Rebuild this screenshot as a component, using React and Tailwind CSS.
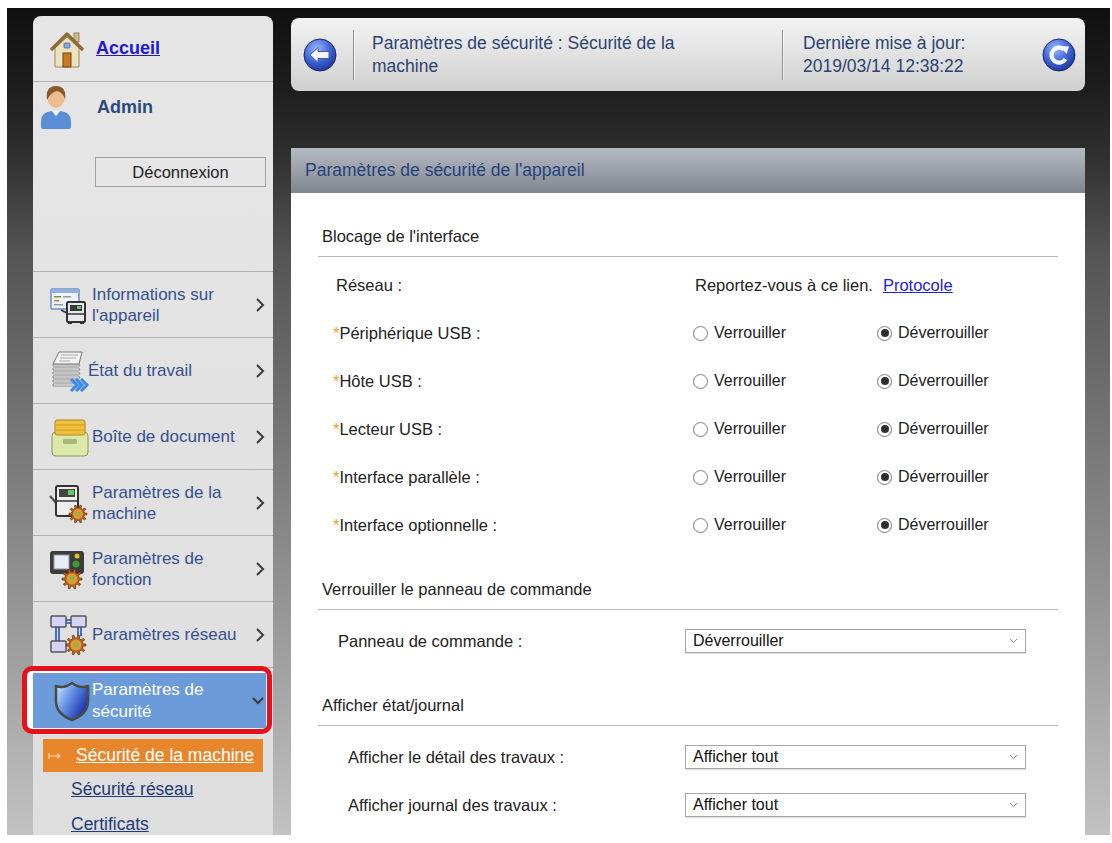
import React from "react";

function gearPath(cx, cy, ro, ri, teeth) {
  let d = "";
  const step = (Math.PI * 2) / teeth;
  for (let i = 0; i < teeth; i++) {
    const a = i * step;
    const pts = [
      [a - step * 0.25, ri],
      [a - step * 0.15, ro],
      [a + step * 0.15, ro],
      [a + step * 0.25, ri],
    ];
    pts.forEach(([ang, r], j) => {
      const x = (cx + Math.cos(ang) * r).toFixed(2);
      const y = (cy + Math.sin(ang) * r).toFixed(2);
      d += (i === 0 && j === 0 ? "M" : "L") + x + " " + y + " ";
    });
  }
  return d + "Z";
}

function Gear({ cx, cy, r = 9 }) {
  return (
    <g>
      <path d={gearPath(cx, cy, r, r * 0.72, 10)} fill="#b8621e" stroke="#7a3c10" strokeWidth="0.8" />
      <circle cx={cx} cy={cy} r={r * 0.55} fill="#e09a3a" />
      <circle cx={cx} cy={cy} r={r * 0.28} fill="#9ab040" />
    </g>
  );
}

const HouseIcon = () => (
  <svg width="38" height="40" viewBox="0 0 38 40">
    <rect x="26" y="4" width="5" height="9" fill="#cdb88e" stroke="#8a7448" strokeWidth="0.8" />
    <path d="M7 19 L19 8 L31 19 V38 H7 Z" fill="#ece2c2" stroke="#9c8858" strokeWidth="1" />
    <path d="M3 21 L19 5 L35 21" fill="none" stroke="#8c6a36" strokeWidth="3.2" strokeLinejoin="round" />
    <rect x="15" y="24" width="8" height="14" fill="#c97a1e" stroke="#6e4410" strokeWidth="1" />
    <rect x="16" y="14" width="6" height="5" rx="1" fill="#7eaae2" stroke="#4a6a9a" strokeWidth="0.8" />
  </svg>
);

const PersonIcon = () => (
  <svg width="32" height="46" viewBox="0 0 32 46">
    <path d="M1 44 V38 Q1 29 12 28 L16 33 L20 28 Q31 29 31 38 V44 Q31 46 28 46 H4 Q1 46 1 44 Z" fill="#5a8fd8" />
    <path d="M12 28 L16 33 L20 28 Z" fill="#f4f4f4" />
    <ellipse cx="16" cy="15" rx="8.5" ry="10" fill="#ebbd8f" />
    <path d="M7 17 Q5 3 16 3 Q27 3 25 17 Q24 10 17 8 Q11 9 7 17 Z" fill="#8b5a2b" />
  </svg>
);

const InfoIcon = () => (
  <svg width="40" height="40" viewBox="0 0 40 40">
    <rect x="1" y="4" width="28" height="20" rx="1" fill="#eef3fb" stroke="#6d8fc6" strokeWidth="1.5" />
    <rect x="1" y="4" width="28" height="4" fill="#8fb0e0" />
    <rect x="4" y="11" width="7" height="1.5" fill="#6a9a3a" />
    <rect x="13" y="11" width="8" height="1.5" fill="#999" />
    <rect x="4" y="15" width="5" height="1.5" fill="#c8843a" />
    <rect x="4" y="19" width="9" height="1.5" fill="#999" />
    <rect x="17" y="17" width="18" height="20" rx="1.5" fill="#e9e9e9" stroke="#333" strokeWidth="2" />
    <rect x="20" y="20" width="12" height="6" fill="#3a3a3a" />
    <rect x="27" y="21" width="4" height="3" fill="#66cc66" />
    <path d="M17 29 H35" stroke="#333" strokeWidth="1.5" />
    <rect x="18" y="36" width="4" height="3" fill="#333" />
    <rect x="30" y="36" width="4" height="3" fill="#333" />
    <path d="M11 25 L17 28" stroke="#333" strokeWidth="1.5" />
  </svg>
);

const JobIcon = () => (
  <svg width="40" height="42" viewBox="0 0 40 42">
    {[0, 1, 2, 3, 4, 5].map((i) => (
      <path key={i} d={`M3 ${14 + i * 4} H29 L30 ${16 + i * 4} H3 Z`} fill="#fafafa" stroke="#777" strokeWidth="0.8" />
    ))}
    <path d="M9 2 H32 L29 14 H3 Z" fill="#f2f2f2" stroke="#777" strokeWidth="1" />
    <path d="M11 5 H28 M10 8 H26 M9 11 H20" stroke="#aaa" strokeWidth="1" />
    {[0, 1, 2].map((i) => (
      <path key={i} d={`M${21 + i * 5} 29 L${27 + i * 5} 35 L${21 + i * 5} 41`} fill="none" stroke="#3a8ae8" strokeWidth="3" />
    ))}
  </svg>
);

const BoxIcon = () => (
  <svg width="38" height="40" viewBox="0 0 38 40">
    <rect x="1" y="15" width="36" height="24" rx="4" fill="#dbe9a8" stroke="#8a9a60" strokeWidth="1" />
    <rect x="4" y="3" width="30" height="15" rx="2" fill="#f2c040" stroke="#b08820" strokeWidth="1" />
    <path d="M4 8 H34 M4 13 H34" stroke="#d09a1a" strokeWidth="1.2" />
    <rect x="12" y="22" width="14" height="5" rx="1.5" fill="#a6b67c" />
  </svg>
);

const MachineIcon = () => (
  <svg width="42" height="42" viewBox="0 0 42 42">
    <path d="M1 14 L8 22" stroke="#555" strokeWidth="2.2" />
    <rect x="7" y="4" width="22" height="30" rx="2" fill="#eeeeee" stroke="#333" strokeWidth="2" />
    <rect x="10" y="7" width="16" height="8" fill="#444" />
    <rect x="19" y="8" width="6" height="5" fill="#66cc66" />
    <path d="M7 19 H29" stroke="#333" strokeWidth="1.5" />
    <Gear cx={29} cy={32} r={9} />
  </svg>
);

const FunctionIcon = () => (
  <svg width="42" height="42" viewBox="0 0 42 42">
    <rect x="1" y="3" width="34" height="23" rx="3" fill="#3c3c3c" />
    <rect x="5" y="7" width="15" height="14" fill="#e6ecf8" stroke="#999" strokeWidth="1" />
    <circle cx="28" cy="8" r="2.5" fill="#e8c020" />
    <circle cx="27" cy="16" r="3.5" fill="#3a9a3a" />
    <Gear cx={23} cy={31} r={10} />
  </svg>
);

const NetworkIcon = () => (
  <svg width="42" height="42" viewBox="0 0 42 42">
    <path d="M16 6 H22 M16 9 H22" stroke="#2050c0" strokeWidth="1.6" />
    <path d="M7 13 V27 M10 13 V27" stroke="#2050c0" strokeWidth="1.6" />
    <path d="M29 13 V22 M32 13 V22" stroke="#2050c0" strokeWidth="1.6" />
    <rect x="2" y="2" width="15" height="11" rx="1" fill="#d4d4fa" stroke="#555" strokeWidth="1.5" />
    <rect x="22" y="2" width="15" height="11" rx="1" fill="#d4d4fa" stroke="#555" strokeWidth="1.5" />
    <rect x="2" y="27" width="15" height="11" rx="1" fill="#d4d4fa" stroke="#555" strokeWidth="1.5" />
    <Gear cx={27} cy={31} r={10} />
  </svg>
);

const ShieldIcon = () => (
  <svg width="38" height="42" viewBox="0 0 38 42">
    <defs>
      <linearGradient id="shieldG" x1="0" y1="0" x2="1" y2="0.6">
        <stop offset="0" stopColor="#d8ecff" />
        <stop offset="0.45" stopColor="#6a98e8" />
        <stop offset="1" stopColor="#1830a8" />
      </linearGradient>
    </defs>
    <path
      d="M3 6 Q11 9 19 3 Q27 9 35 6 V21 Q35 34 19 40 Q3 34 3 21 Z"
      fill="url(#shieldG)"
      stroke="#4a4a4a"
      strokeWidth="2.6"
      strokeLinejoin="round"
    />
  </svg>
);

const BackIcon = () => (
  <svg width="34" height="34" viewBox="0 0 34 34">
    <defs>
      <radialGradient id="backG" cx="0.4" cy="0.3" r="0.8">
        <stop offset="0" stopColor="#9ab8ff" />
        <stop offset="0.55" stopColor="#3b60d2" />
        <stop offset="1" stopColor="#1a2c8c" />
      </radialGradient>
    </defs>
    <circle cx="17" cy="17" r="16" fill="url(#backG)" stroke="#1a2a70" strokeWidth="1" />
    <path d="M7 17 L15 9.5 V13.5 H26 V20.5 H15 V24.5 Z" fill="#f4f6ff" stroke="#4a5a98" strokeWidth="1" strokeLinejoin="round" />
  </svg>
);

const RefreshIcon = () => (
  <svg width="34" height="34" viewBox="0 0 34 34">
    <defs>
      <radialGradient id="refG" cx="0.4" cy="0.3" r="0.8">
        <stop offset="0" stopColor="#9ab8ff" />
        <stop offset="0.55" stopColor="#3b60d2" />
        <stop offset="1" stopColor="#1a2c8c" />
      </radialGradient>
    </defs>
    <circle cx="17" cy="17" r="16" fill="url(#refG)" stroke="#1a2a70" strokeWidth="1" />
    <path d="M22 11.5 A7.5 7.5 0 1 0 23.5 21" fill="none" stroke="#f4f6ff" strokeWidth="4.2" />
    <path d="M18 8 L27 8.5 L24.5 16 Z" fill="#f4f6ff" />
  </svg>
);

const Chevron = () => (
  <svg width="10" height="16" viewBox="0 0 10 16">
    <path d="M2 2 L8 8 L2 14" fill="none" stroke="#3c3c3c" strokeWidth="2" />
  </svg>
);

function NavItem({ icon, children }) {
  return (
    <div className="h-[66px] flex items-center border-b border-[#b2b2b2] pl-[15px] pr-[8px]">
      <div className="w-[44px] flex justify-center">{icon}</div>
      <div className="flex-1 text-[17px] leading-[21px] text-[#35518f]">{children}</div>
      <Chevron />
    </div>
  );
}

function Radio({ checked }) {
  return (
    <span className="w-[15px] h-[15px] rounded-full border border-[#7c7c7c] bg-white flex items-center justify-center">
      {checked && <span className="w-[8px] h-[8px] rounded-full bg-[#2e2e2e]" />}
    </span>
  );
}

function SectionTitle({ children, className = "" }) {
  return (
    <div className={"mx-[27px] pl-[4px] h-[40px] flex items-center border-b border-[#b8b8b8] text-[16.5px] text-[#222] " + className}>
      {children}
    </div>
  );
}

function Select({ value }) {
  return (
    <div className="w-[341px] h-[24px] border border-[#a6a6a6] shadow-[0_1px_1px_rgba(0,0,0,0.12)] bg-white flex items-center pl-[7px] pr-[7px]">
      <span className="flex-1 text-[16px] text-[#111]">{value}</span>
      <svg width="9" height="6" viewBox="0 0 9 6">
        <path d="M1 1 L4.5 4.5 L8 1" fill="none" stroke="#8a8a8a" strokeWidth="1" />
      </svg>
    </div>
  );
}

const rows = [
  { label: "Périphérique USB :" },
  { label: "Hôte USB :" },
  { label: "Lecteur USB :" },
  { label: "Interface parallèle :" },
  { label: "Interface optionnelle :" },
];

export default function App() {
  return (
    <div className="w-[1112px] h-[843px] bg-white pt-[8px] pl-[7px] pr-[2px] pb-[8px] font-['Liberation_Sans',Arial,sans-serif] overflow-hidden">
      <div className="h-full flex overflow-hidden bg-[linear-gradient(to_bottom,#101010_0%,#1e1e1e_10%,#303030_18%,#555555_30%,#8a8a8a_65%,#c2c2c2_100%)]">
        {/* SIDEBAR */}
        <aside className="ml-[26px] mt-[8px] w-[240px] shrink-0 rounded-t-[8px] bg-[linear-gradient(to_bottom,#e6e6e6,#dedede)]">
          <div className="h-[66px] flex items-center border-b border-[#b2b2b2] pl-[15px]">
            <div className="w-[48px]">
              <HouseIcon />
            </div>
            <span className="text-[18px] font-bold text-[#1d1ad2] underline">Accueil</span>
          </div>

          <div className="h-[190px] border-b border-[#b2b2b2]">
            <div className="h-[48px] flex items-center pl-[7px]">
              <div className="w-[57px]">
                <PersonIcon />
              </div>
              <span className="text-[18px] font-bold text-[#2b4a80] mt-[2px]">Admin</span>
            </div>
            <div className="mt-[27px] ml-[62px] mr-[7px] h-[30px] border border-[#a2a2a2] bg-[#e6e6e6] flex items-center justify-center text-[16.5px] text-[#222]">
              Déconnexion
            </div>
          </div>

          <NavItem icon={<InfoIcon />}>
            Informations sur l'appareil
          </NavItem>
          <NavItem icon={<JobIcon />}>
            <span className="-ml-[4px]">État du travail</span>
          </NavItem>
          <NavItem icon={<BoxIcon />}>Boîte de document</NavItem>
          <NavItem icon={<MachineIcon />}>Paramètres de la machine</NavItem>
          <NavItem icon={<FunctionIcon />}>Paramètres de fonction</NavItem>
          <NavItem icon={<NetworkIcon />}>Paramètres réseau</NavItem>

          <div className="relative isolate h-[66px] py-[5px]">
            <div className="absolute -left-[11px] -top-[2px] right-[1px] bottom-0 z-0 rounded-[10px] border-[5px] border-[#e5121b] bg-white" />
            <div className="relative z-10 h-[55px] mr-[7px] bg-[#6b9bd9] flex items-center pl-[20px]">
              <div className="w-[39px]">
                <ShieldIcon />
              </div>
              <div className="flex-1 text-[17px] leading-[22px] text-white">Paramètres de sécurité</div>
              <svg width="14" height="10" viewBox="0 0 14 10" className="mr-[1px]">
                <path d="M2 2 L7 7 L12 2" fill="none" stroke="#3c3c3c" strokeWidth="2" />
              </svg>
            </div>
          </div>

          <div className="mt-[5px] mx-[10px] h-[33px] bg-[#e8862c] flex items-center pl-[5px]">
            <svg width="14" height="8" viewBox="0 0 14 8">
              <path d="M1 1 V7 M1 4 H10" stroke="#f6cfa6" strokeWidth="1.2" />
              <path d="M9 1 L13 4 L9 7 Z" fill="#f6cfa6" />
            </svg>
            <span className="ml-[14px] text-[17.5px] text-white underline">Sécurité de la machine</span>
          </div>
          <div className="h-[35px] flex items-center pl-[38px] text-[17.5px] text-[#1f3b78] underline">Sécurité réseau</div>
          <div className="h-[35px] flex items-center pl-[38px] text-[17.5px] text-[#1f3b78] underline">Certificats</div>
        </aside>

        {/* MAIN */}
        <main className="ml-[18px] mt-[10px] w-[794px] shrink-0 flex flex-col">
          <div className="h-[73px] rounded-[8px] bg-[linear-gradient(to_bottom,#f3f3f3,#d0d0d0)] flex items-center">
            <div className="ml-[12px]">
              <BackIcon />
            </div>
            <div className="ml-[16px] w-[2px] h-[50px] border-l border-[#8e8e8e] bg-white/60" />
            <div className="ml-[17px] w-[340px] text-[17.5px] leading-[23px] text-[#2d4371]">
              Paramètres de sécurité : Sécurité de la machine
            </div>
            <div className="ml-[70px] w-[2px] h-[50px] border-l border-[#8e8e8e] bg-white/60" />
            <div className="ml-[19px] w-[228px] text-[17.5px] leading-[23px] text-[#2d4371]">
              <div>Dernière mise à jour:</div>
              <div>2019/03/14 12:38:22</div>
            </div>
            <div className="ml-[11px]">
              <RefreshIcon />
            </div>
          </div>

          <div className="mt-[57px] h-[45px] bg-[linear-gradient(to_bottom,#b6bac2,#80868f)] flex items-center pl-[14px] text-[17.5px] text-[#26427f]">
            Paramètres de sécurité de l'appareil
          </div>

          <div className="flex-1 bg-white">
            <SectionTitle className="mt-[24px]">Blocage de l'interface</SectionTitle>
            <div className="mt-[4px]">
              <div className="h-[48px] flex items-center text-[16.5px] text-[#222]">
                <div className="w-[402px] pl-[45px]">Réseau :</div>
                <span className="ml-[2px]">Reportez-vous à ce lien.</span>
                <span className="ml-[10px] text-[#2222d8] underline">Protocole</span>
              </div>
              {rows.map((r, i) => (
                <div key={i} className="h-[48px] flex items-center text-[16.5px] text-[#222]">
                  <div className="w-[402px] pl-[42px]">
                    <span className="text-[#f0a030]">*</span>
                    {r.label}
                  </div>
                  <div className="w-[184px] flex items-center gap-[6px]">
                    <Radio />
                    <span className="text-[16px]">Verrouiller</span>
                  </div>
                  <div className="flex items-center gap-[6px]">
                    <Radio checked />
                    <span className="text-[16px]">Déverrouiller</span>
                  </div>
                </div>
              ))}
            </div>

            <SectionTitle className="mt-[21px]">Verrouiller le panneau de commande</SectionTitle>
            <div className="mt-[7px] h-[48px] flex items-center text-[16.5px] text-[#222]">
              <div className="w-[394px] pl-[47px]">Panneau de commande :</div>
              <Select value="Déverrouiller" />
            </div>

            <SectionTitle className="mt-[21px]">Afficher état/journal</SectionTitle>
            <div className="mt-[7px]">
              <div className="h-[48px] flex items-center text-[16.5px] text-[#222]">
                <div className="w-[394px] pl-[57px]">Afficher le détail des travaux :</div>
                <Select value="Afficher tout" />
              </div>
              <div className="h-[48px] flex items-center text-[16.5px] text-[#222]">
                <div className="w-[394px] pl-[57px]">Afficher journal des travaux :</div>
                <Select value="Afficher tout" />
              </div>
            </div>
          </div>
        </main>
      </div>
    </div>
  );
}
